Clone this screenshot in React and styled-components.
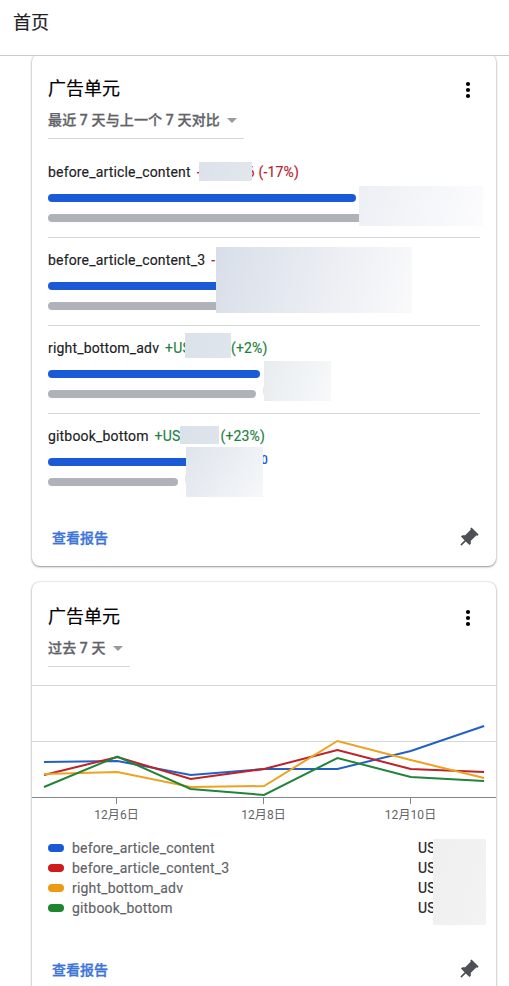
import React from 'react'
import styled, { createGlobalStyle } from "styled-components";

const GlobalStyle = createGlobalStyle`
  * {
    box-sizing: border-box;
  }

  body {
    margin: 0;
    height: 986px;
    overflow: hidden;
    background-color: #ffffff;
    color: #202124;
    font-family: Roboto, 'Noto Sans CJK SC', sans-serif;
    font-size: 14px;
  }

  h1, h2, p {
    margin: 0;
  }
`

const Page = styled.div`
  height: 986px;
  overflow: hidden;
`

const Header = styled.header`
  position: relative;
  z-index: 2;
  height: 56px;
  padding: 10px 13px 0;
  border-bottom: 1px solid #c8cacc;
  background-color: #ffffff;

  h1 {
    font-size: 18px;
    font-weight: 400;
    line-height: 26px;
    -webkit-text-stroke: 0.2px currentColor;
  }
`

const CardList = styled.main`
  display: flex;
  flex-direction: column;
  gap: 16px;
  width: 464px;
  margin: -2px 0 0 32px;
`

const CardBox = styled.section`
  display: flex;
  flex-direction: column;
  border-radius: 8px;
  background-color: #ffffff;
  box-shadow: 0 1px 2px rgba(60, 64, 67, 0.5), 0 0 2px rgba(60, 64, 67, 0.3);
`

const CardTop = styled.div`
  display: flex;
  justify-content: space-between;
  height: 96px;
  padding: 22px 16px 0;

  h2 {
    color: #000000;
    font-size: 18px;
    font-weight: 400;
    line-height: 26px;
    -webkit-text-stroke: 0.2px currentColor;
  }
`

const RangeSelect = styled.div`
  display: flex;
  align-items: center;
  width: ${props => props.$width}px;
  height: 37px;
  padding-bottom: 2px;
  border-bottom: 1px solid #d5d7da;
  color: #5f6368;
  font-weight: 500;
  white-space: nowrap;
  letter-spacing: 0.13px;
  -webkit-text-stroke: 0.3px currentColor;

  &::after {
    content: '';
    margin: 2px 0 0 7px;
    border: 5px solid transparent;
    border-top-color: #9a9a9a;
    border-bottom: 0;
  }
`

const MoreIcon = styled.svg`
  width: 24px;
  height: 24px;
  margin-top: 2px;
`

const CardBottom = styled.div`
  display: flex;
  justify-content: space-between;
  align-items: center;
  height: 56px;
  padding: 0 16px 0 20px;

  a {
    margin-bottom: 2px;
    color: #3b74d6;
    font-weight: 500;
    -webkit-text-stroke: 0.3px currentColor;
  }

  svg {
    width: 24px;
    height: 24px;
    transform: rotate(45deg);
  }
`

const UnitList = styled.div`
  padding: 0 16px;
  margin-bottom: 8px;
`

const UnitRow = styled.div`
  position: relative;
  height: 88px;
  padding-top: 12px;
  border-bottom: 1px solid #d5d7da;

  &:last-child {
    border-bottom: none;
  }
`

const UnitTitle = styled.div`
  display: flex;
  height: 20px;
  margin-bottom: 12px;
  line-height: 20px;
  letter-spacing: 0.17px;
  white-space: nowrap;
  -webkit-text-stroke: 0.15px currentColor;
`

const Change = styled.span`
  margin-left: ${props => props.$gap}px;
  color: ${props => props.$up ? "#1e8040" : "#b8202c"};
`

const BarLine = styled.div`
  display: flex;
  align-items: center;
  height: 8px;
  margin-bottom: 12px;
  color: ${props => props.$color};
  font-size: 12px;
  font-weight: 500;
`

const Bar = styled.div`
  flex: none;
  width: ${props => props.$width}px;
  height: 8px;
  border-radius: 4px;
  background-color: ${props => props.$color};
`

const Remainder = styled.span`
  position: relative;
  top: -2px;
  margin-left: ${props => props.$gap}px;
`

const Cover = styled.div`
  position: absolute;
  left: ${props => props.$x}px;
  top: ${props => props.$y}px;
  width: ${props => props.$w}px;
  height: ${props => props.$h}px;
  background: linear-gradient(${props => props.$angle || 105}deg, ${props => props.$from}, ${props => props.$to});
`

const ChartBox = styled.div`
  margin-top: 7px;

  svg {
    display: block;
    width: 464px;
    height: 119px;
  }
`

const AxisLabels = styled.div`
  display: flex;
  padding: 2px 0 0 11px;
  color: #5f6368;
  font-size: 12px;
  line-height: 18px;
  letter-spacing: 0.1px;

  span {
    width: 147px;
    text-align: center;
  }
`

const Legend = styled.div`
  position: relative;
  height: 80px;
  margin: 14px 16px 24px;
`

const LegendRow = styled.div`
  display: flex;
  align-items: center;
  height: 20px;
  color: #5f6368;
  letter-spacing: 0.17px;
  -webkit-text-stroke: 0.15px currentColor;

  p {
    width: 346px;
    margin-left: 8px;
  }

  span {
    color: #202124;
  }
`

const units = [
  {
    name: "before_article_content", head: "-", tail: "6 (-17%)", gap: 46, current: 308, previous: 318,
    covers: [
      { x: 151, y: 12, w: 53, h: 19, from: "#dde2ea", to: "#e2e6ed" },
      { x: 311, y: 36, w: 124, h: 40, from: "#eceff4", to: "#fcfcfd" },
    ],
  },
  {
    name: "before_article_content_3", head: "-", current: 180, previous: 180,
    covers: [{ x: 168, y: 9, w: 196, h: 66, from: "#d8dee9", to: "#fafafb" }],
  },
  {
    name: "right_bottom_adv", head: "+US", tail: "(+2%)", gap: 40, up: true, current: 212, previous: 208, previousText: "U", previousGap: 7,
    covers: [
      { x: 137, y: 7, w: 46, h: 25, from: "#dbe2ea", to: "#dfe5ec" },
      { x: 216, y: 35, w: 67, h: 40, from: "#e7ecef", to: "#f7f9fa" },
    ],
  },
  {
    name: "gitbook_bottom", head: "+US", tail: "(+23%)", gap: 40, up: true, current: 145, previous: 130, currentText: "0", currentGap: 68, previousText: "U", previousGap: 7,
    covers: [
      { x: 132, y: 12, w: 39, h: 18, from: "#dae1e9", to: "#dfe4eb" },
      { x: 138, y: 33, w: 77, h: 50, from: "#dfe4ec", to: "#f6f8fa", angle: 125 },
    ],
  },
]

const series = [
  { name: "before_article_content", color: "#1a5ad7", line: "#2360c5", values: [77, 76, 90, 84, 84, 66, 41] },
  { name: "before_article_content_3", color: "#ce1c1c", line: "#bd2227", values: [90, 72, 94, 84, 65, 84, 87] },
  { name: "right_bottom_adv", color: "#eb9c14", line: "#eda220", values: [89, 87, 102, 101, 56, 75, 93] },
  { name: "gitbook_bottom", color: "#20852f", line: "#21843a", values: [102, 71.5, 104, 110, 73, 92, 96] },
]

const days = ["12月6日", "12月8日", "12月10日"]

function Card(props) {
  const { range, rangeWidth, children } = props

  return (
    <CardBox>
      <CardTop>
        <div>
          <h2>广告单元</h2>
          <RangeSelect $width={rangeWidth}>{range}</RangeSelect>
        </div>
        <MoreIcon viewBox="0 0 24 24">
          <circle cx="12" cy="6" r="2.1" />
          <circle cx="12" cy="12" r="2.1" />
          <circle cx="12" cy="18" r="2.1" />
        </MoreIcon>
      </CardTop>
      {children}
      <CardBottom>
        <a>查看报告</a>
        <svg viewBox="0 0 24 24" fill="#4d5156">
          <path d="M16 12V4h1V2H7v2h1v8l-2 2v2h5.2v6h1.6v-6H18v-2l-2-2z" />
        </svg>
      </CardBottom>
    </CardBox>
  )
}

function Unit({ unit }) {
  return (
    <UnitRow>
      <UnitTitle>
        <span>{unit.name}</span>
        <Change $gap={6} $up={unit.up}>{unit.head}</Change>
        {unit.tail && <Change $gap={unit.gap} $up={unit.up}>{unit.tail}</Change>}
      </UnitTitle>
      <BarLine $color="#1a56d6">
        <Bar $width={unit.current} $color="#1a5ad7" />
        {unit.currentText && <Remainder $gap={unit.currentGap}>{unit.currentText}</Remainder>}
      </BarLine>
      <BarLine $color="#b0b2ba">
        <Bar $width={unit.previous} $color="#b0b2b9" />
        {unit.previousText && <Remainder $gap={unit.previousGap}>{unit.previousText}</Remainder>}
      </BarLine>
      {unit.covers.map((cover) => (
        <Cover
          key={cover.x}
          $x={cover.x}
          $y={cover.y}
          $w={cover.w}
          $h={cover.h}
          $from={cover.from}
          $to={cover.to}
          $angle={cover.angle}
        />
      ))}
    </UnitRow>
  )
}

function Chart() {
  const toPoints = (values) => values.map((y, i) => `${12 + i * 73.35},${y}`).join(" ");

  return (
    <ChartBox>
      <svg viewBox="0 0 464 119">
        <path d="M0 .5H464M0 56.5H464" stroke="#d5d7da" />
        <path d="M0 112.5H464M84.5 112v7M231.5 112v7M378.5 112v7" stroke="#80868b" />
        {series.map((item) => (
          <polyline key={item.name} points={toPoints(item.values)} fill="none" stroke={item.line} strokeWidth="2" />
        ))}
      </svg>
      <AxisLabels>
        {days.map((day) => <span key={day}>{day}</span>)}
      </AxisLabels>
    </ChartBox>
  )
}

function App() {
  return (
    <>
      <GlobalStyle />
      <Page>
        <Header>
          <h1>首页</h1>
        </Header>
        <CardList>
          <Card range="最近 7 天与上一个 7 天对比" rangeWidth={196}>
            <UnitList>
              {units.map((unit) => <Unit key={unit.name} unit={unit} />)}
            </UnitList>
          </Card>
          <Card range="过去 7 天" rangeWidth={82}>
            <Chart />
            <Legend>
              {series.map((item) => (
                <LegendRow key={item.name}>
                  <Bar $width={16} $color={item.color} />
                  <p>{item.name}</p>
                  <span>US</span>
                </LegendRow>
              ))}
              <Cover $x={385} $y={1} $w={53} $h={86} $from="#efefef" $to="#f3f3f3" />
            </Legend>
          </Card>
        </CardList>
      </Page>
    </>
  )
}

export default App
